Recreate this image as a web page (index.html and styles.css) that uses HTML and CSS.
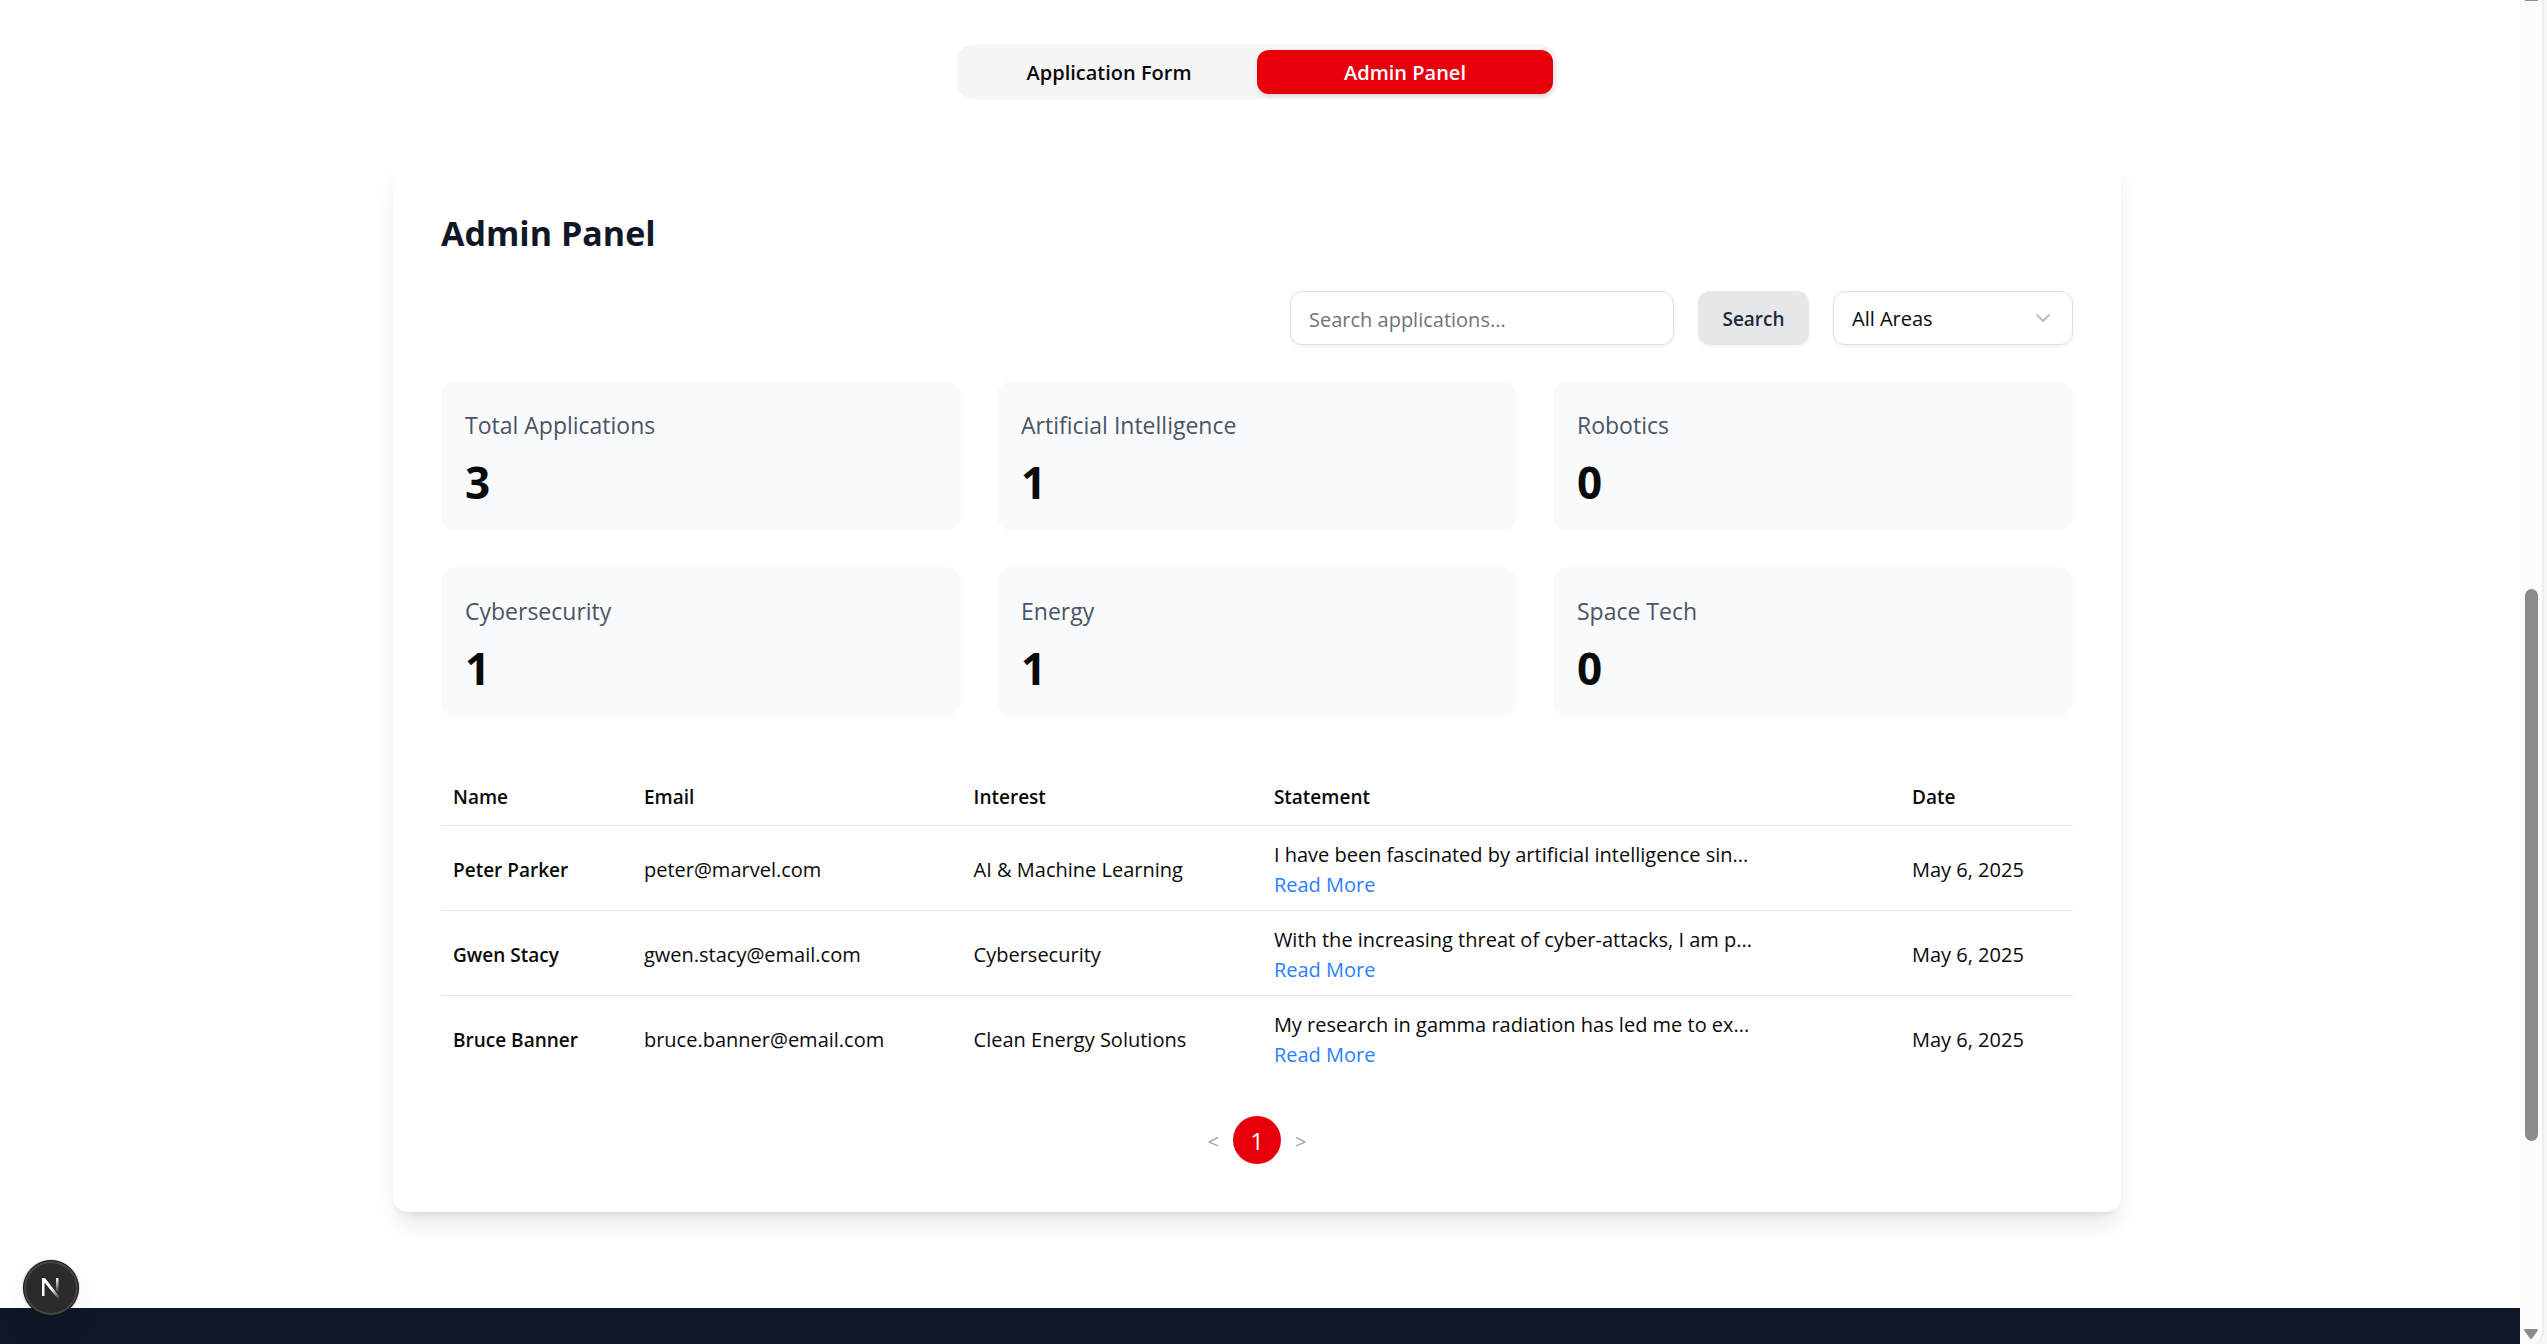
FILE: index.html
```html
<!DOCTYPE html>
<html lang="en">
<head>
<meta charset="utf-8">
<meta name="viewport" content="width=device-width, initial-scale=1">
<title>Admin Panel</title>
<link rel="stylesheet" href="styles.css">
</head>
<body>
<div class="window">
  <div class="page">
    <main class="main">
      <div class="tabs" role="tablist">
        <button class="tab" type="button" role="tab" aria-selected="false">Application Form</button>
        <button class="tab tab-active" type="button" role="tab" aria-selected="true">Admin Panel</button>
      </div>

      <section class="card">
        <h2 class="title">Admin Panel</h2>

        <form class="toolbar">
          <input class="search-input" type="text" placeholder="Search applications..." aria-label="Search applications">
          <button class="search-button" type="button">Search</button>
          <div class="select-wrap">
            <select class="select" aria-label="Area">
              <option>All Areas</option>
              <option>Artificial Intelligence</option>
              <option>Robotics</option>
              <option>Cybersecurity</option>
              <option>Energy</option>
              <option>Space Tech</option>
            </select>
            <svg class="chevron" width="24" height="24" viewBox="0 0 24 24" fill="none" stroke="currentColor" stroke-width="2" stroke-linecap="round" stroke-linejoin="round" aria-hidden="true"><path d="M6 9l6 6 6-6"/></svg>
          </div>
        </form>

        <div class="stats">
          <div class="stat"><p class="stat-label">Total Applications</p><p class="stat-value">3</p></div>
          <div class="stat"><p class="stat-label">Artificial Intelligence</p><p class="stat-value">1</p></div>
          <div class="stat"><p class="stat-label">Robotics</p><p class="stat-value">0</p></div>
          <div class="stat"><p class="stat-label">Cybersecurity</p><p class="stat-value">1</p></div>
          <div class="stat"><p class="stat-label">Energy</p><p class="stat-value">1</p></div>
          <div class="stat"><p class="stat-label">Space Tech</p><p class="stat-value">0</p></div>
        </div>

        <table class="table">
          <colgroup>
            <col class="col-name"><col class="col-email"><col class="col-interest"><col class="col-statement"><col class="col-date">
          </colgroup>
          <thead>
            <tr><th scope="col">Name</th><th scope="col">Email</th><th scope="col">Interest</th><th scope="col">Statement</th><th scope="col">Date</th></tr>
          </thead>
          <tbody>
            <tr>
              <td class="name">Peter Parker</td><td>peter@marvel.com</td><td>AI &amp; Machine Learning</td>
              <td><p class="statement">I have been fascinated by artificial intelligence sin...</p><a class="more" href="#">Read More</a></td>
              <td>May 6, 2025</td>
            </tr>
            <tr>
              <td class="name">Gwen Stacy</td><td>gwen.stacy@email.com</td><td>Cybersecurity</td>
              <td><p class="statement">With the increasing threat of cyber-attacks, I am p...</p><a class="more" href="#">Read More</a></td>
              <td>May 6, 2025</td>
            </tr>
            <tr>
              <td class="name">Bruce Banner</td><td>bruce.banner@email.com</td><td>Clean Energy Solutions</td>
              <td><p class="statement">My research in gamma radiation has led me to ex...</p><a class="more" href="#">Read More</a></td>
              <td>May 6, 2025</td>
            </tr>
          </tbody>
        </table>

        <nav class="pagination" aria-label="Pages">
          <button class="page-step" type="button" aria-label="Previous page">&lt;</button>
          <button class="page-number" type="button" aria-current="page">1</button>
          <button class="page-step" type="button" aria-label="Next page">&gt;</button>
        </nav>
      </section>
    </main>
    <footer class="footer"></footer>
  </div>

  <div class="scrollbar" aria-hidden="true">
    <div class="track">
      <div class="track-cap"></div>
      <div class="track-above"></div>
      <div class="thumb"></div>
      <div class="track-below"></div>
      <svg class="arrow" width="16" height="12" viewBox="0 0 16 12"><path d="M2 1h12q1.500 0 .8 1.500L9.200 10.200q-1.200 1.500-2.400 0L1.200 2.500Q.5 1 2 1z" fill="#8b8b8b"/></svg>
    </div>
  </div>
</div>

<button class="dev-badge" type="button" aria-label="Open developer tools">
  <svg width="24" height="28" viewBox="0 0 24 28" fill="none" aria-hidden="true">
    <defs>
      <linearGradient id="stem" x1="0" y1="4" x2="0" y2="19" gradientUnits="userSpaceOnUse"><stop offset="0" stop-color="#fff"/><stop offset="1" stop-color="#fff" stop-opacity="0"/></linearGradient>
      <linearGradient id="slash" x1="13" y1="15" x2="20" y2="25" gradientUnits="userSpaceOnUse"><stop offset="0" stop-color="#fff"/><stop offset="1" stop-color="#fff" stop-opacity="0"/></linearGradient>
    </defs>
    <path d="M3 4v18h2.500V8.500L19 25l2-1.500L6 4z" fill="url(#slash)"/>
    <path d="M17 4h2.500v15.500L17 16.500z" fill="url(#stem)"/>
  </svg>
</button>
</body>
</html>
```
FILE: styles.css
```css
* { box-sizing: border-box; }

body {
  margin: 0;
  background: #fff;
  color: #0a0a0a;
  font-family: "Open Sans", "Noto Sans", sans-serif;
  font-size: 20px;
  line-height: 30px;
}

button, input, select { font: inherit; color: inherit; }
button { border: 0; padding: 0; background: none; cursor: pointer; }
h2, p { margin: 0; }

.window { display: flex; min-height: 100vh; }
.page { flex: 1; display: flex; flex-direction: column; }

.main {
  display: flex;
  flex-direction: column;
  align-items: center;
  gap: 60px;
  padding: 45px 30px 96px 24px;
}

.tabs {
  display: grid;
  grid-template-columns: 1fr 1fr;
  width: 100%;
  max-width: 600px;
  height: 54px;
  padding: 5px 4px;
  border-radius: 15px;
  background: #f5f5f5;
}
.tab { padding-top: 2px; border-radius: 12px; font-weight: 600; }
.tab-active {
  background: #e7000b;
  color: #fff;
  box-shadow: 0 2px 4px rgba(0, 0, 0, .1), 0 2px 3px -2px rgba(0, 0, 0, .1);
}

.card {
  width: 100%;
  max-width: 1728px;
  padding: 48px;
  border-radius: 15px;
  background: #fff;
  box-shadow: 0 15px 22px -4px rgba(0, 0, 0, .1), 0 6px 9px -6px rgba(0, 0, 0, .1);
}
.title {
  margin-bottom: 32px;
  color: #101828;
  font-size: 34px;
  line-height: 52px;
  font-weight: 700;
}

.toolbar { display: flex; justify-content: flex-end; gap: 24px; margin-bottom: 36px; }
.search-input, .select {
  height: 54px;
  padding: 2px 18px 0;
  border: 1px solid #e0e0e0;
  border-radius: 12px;
  background: #fff;
  box-shadow: 0 2px 3px rgba(0, 0, 0, .05);
}
.search-input { width: 384px; }
.search-input::placeholder { color: #737373; }
.search-button {
  width: 111px;
  padding-top: 2px;
  border-radius: 12px;
  background: #e5e7eb;
  color: #1e2939;
  font-size: 19px;
  font-weight: 600;
  box-shadow: 0 2px 3px rgba(0, 0, 0, .05);
}
.select-wrap { position: relative; width: 240px; }
.select { width: 100%; appearance: none; }
.chevron { position: absolute; top: 15px; right: 18px; color: #bdbdbd; pointer-events: none; }

.stats {
  display: grid;
  grid-template-columns: repeat(3, 1fr);
  gap: 36px;
  margin-bottom: 48px;
}
.stat { padding: 26px 24px 22px; border-radius: 15px; background: #f9fafb; }
.stat-label { margin-bottom: 12px; color: #4a5565; font-size: 23px; line-height: 36px; }
.stat-value { font-size: 44px; line-height: 54px; font-weight: 700; }

.table { width: 100%; margin-bottom: 36px; border-collapse: collapse; table-layout: fixed; text-align: left; }
.col-name { width: 11.7%; }
.col-email { width: 20.2%; }
.col-interest { width: 18.4%; }
.col-statement { width: 39.1%; }
.col-date { width: 10.6%; }
th, td { padding: 14px 12px 10px; white-space: nowrap; }
th { height: 60px; font-size: 19px; font-weight: 600; }
tr { border-bottom: 1px solid #e5e5e5; }
tbody tr:last-child { border-bottom: 0; }
.name { font-size: 19px; font-weight: 600; }
.more { color: #2b7fff; text-decoration: none; }

.pagination { display: flex; justify-content: center; align-items: center; gap: 13px; }
.page-step { padding: 4px 1px 0; color: #99a1af; }
.page-number {
  width: 48px;
  height: 48px;
  padding-top: 2px;
  border-radius: 50%;
  background: #e7000b;
  color: #fff;
  font-size: 23px;
}

.footer { flex: 1; min-height: 36px; background: #101828; }

.scrollbar { display: flex; width: 27px; background: #f7f7f7; }
.track {
  display: flex;
  flex-direction: column;
  align-items: center;
  width: 24px;
  padding-bottom: 4px;
  border-right: 2px solid #eee;
  border-radius: 0 0 12px 0;
  background: #fcfcfc;
}
.track-cap { width: 13px; height: 1px; background: #8b8b8b; }
.track-above { flex: 588; }
.thumb { flex: 551; width: 13px; border-radius: 7px; background: #8b8b8b; }
.track-below { flex: 187; }

.dev-badge {
  position: fixed;
  left: 23px;
  bottom: 28px;
  display: flex;
  align-items: center;
  justify-content: center;
  width: 56px;
  height: 56px;
  border: 1px solid #171717;
  border-radius: 50%;
  background: #2b2b2b;
  box-shadow: inset 0 0 0 2px #464646, 0 0 2px rgba(0, 0, 0, .4), 0 12px 36px rgba(0, 0, 0, .05);
}
```
